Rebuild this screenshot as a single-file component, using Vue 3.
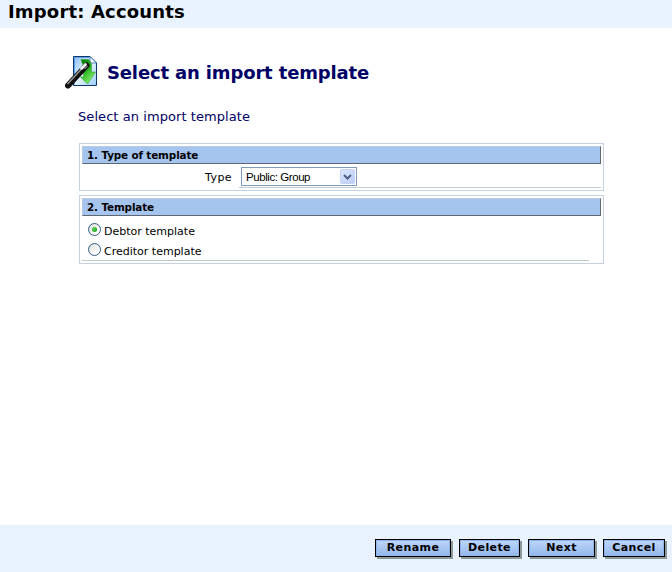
<script setup>
import { ref } from 'vue'

const template = ref('debtor')
const options = [
  { id: 'debtor', label: 'Debtor template' },
  { id: 'creditor', label: 'Creditor template' },
]
const actions = ['Rename', 'Delete', 'Next', 'Cancel']
</script>

<template>
  <div class="page">
    <header class="top"><h1>Import: Accounts</h1></header>

    <main>
      <div class="heading">
        <svg class="wizard" width="34" height="34" viewBox="0 0 34 34">
          <defs>
            <linearGradient id="paper" x1="0" y1="0" x2="1" y2="1">
              <stop offset="0" stop-color="#86bdf2" />
              <stop offset=".5" stop-color="#e4f3ff" />
              <stop offset="1" stop-color="#9accf9" />
            </linearGradient>
            <linearGradient id="arrow" x1="0" y1="0" x2=".6" y2="1">
              <stop offset="0" stop-color="#087008" />
              <stop offset=".5" stop-color="#27b41f" />
              <stop offset="1" stop-color="#8df273" />
            </linearGradient>
          </defs>
          <path d="M8.500 1.500H25L31.500 8V30.500H8.500Z" fill="url(#paper)" stroke="#10386f" />
          <path d="M9.500 29.500V2.500H24.500" fill="none" stroke="#5aa2e6" />
          <path d="M25 1.500V8H31.500Z" fill="#fff" stroke="#2862aa" stroke-width=".8" />
          <path d="M16 4.500H23.500L26.500 9V17H30.500L22.500 29L15.500 22H18.500V12Z" fill="url(#arrow)" stroke="#2fa52a" stroke-width=".6" />
          <path d="M3 30.500L21.500 10.500" stroke="#101010" stroke-width="6" stroke-linecap="round" />
          <path d="M2.500 29L16 14.500" stroke="#969696" stroke-width="1.500" />
          <path d="M16.500 13.500L20.500 9.500" stroke="#f1f1f1" stroke-width="2.800" stroke-linecap="round" />
          <path d="M19.500 14L22.500 11" stroke="#777" stroke-width="1.500" />
        </svg>
        <h2>Select an import template</h2>
      </div>
      <p class="intro">Select an import template</p>

      <section class="panel type-panel">
        <h3>1. Type of template</h3>
        <div class="row">
          <span class="label">Type</span>
          <div class="field">
            <div class="select">
              <span class="value">Public: Group</span>
              <span class="drop">
                <svg width="9" height="6" viewBox="0 0 9 6"><path d="M1 1L4.500 4.500L8 1" fill="none" stroke="#4d6185" stroke-width="2" /></svg>
              </span>
            </div>
          </div>
        </div>
      </section>

      <section class="panel template-panel">
        <h3>2. Template</h3>
        <div class="options">
          <div v-for="o in options" :key="o.id" class="option" @click="template = o.id">
            <span class="radio"><i v-if="template === o.id"></i></span>
            <span>{{ o.label }}</span>
          </div>
        </div>
      </section>
    </main>

    <footer>
      <button v-for="a in actions" :key="a" :class="a.toLowerCase()"><span>{{ a }}</span></button>
    </footer>
  </div>
</template>

<style>
body { background: #fff; }
</style>

<style scoped>
.page {
  width: 672px;
  height: 572px;
  display: flex;
  flex-direction: column;
  overflow: hidden;
  background: #fff;
  font-family: "DejaVu Sans", Verdana, sans-serif;
  color: #000;
}
.page * { box-sizing: border-box; }
h1, h2, h3, p { margin: 0; white-space: nowrap; }
.top { height: 28px; background: #e8f3ff; padding: 1px 0 0 8px; }
h1 { font-size: 18px; line-height: 22px; letter-spacing: .17px; }
main { flex: 1; padding: 27px 0 0 65px; }
.heading { display: flex; height: 34px; }
.wizard { flex: none; }
h2 { margin-left: 8px; color: #000066; font-size: 18px; line-height: 35px; letter-spacing: -.15px; }
.intro { margin: 19px 0 0 13px; height: 16px; font-size: 13px; line-height: 17px; letter-spacing: .07px; color: #000066; }
.panel { width: 525px; margin-left: 14px; padding: 2px; border: 1px solid #c5d2e3; }
.type-panel { margin-top: 19px; height: 48px; }
.template-panel { margin-top: 4px; height: 69px; }
h3 {
  width: 519px;
  height: 18px;
  padding-left: 4px;
  background: #a6c5ee;
  border: 1px solid #b6cae4;
  border-right-color: #5c6675;
  border-bottom-color: #5c6675;
  font-size: 10.4px;
  line-height: 16px;
  letter-spacing: -.13px;
}
.row { display: flex; width: 519px; height: 24px; font-size: 11px; }
.label { width: 157px; padding-left: 123px; line-height: 27px; letter-spacing: .45px; }
.field { flex: 1; height: 24px; padding: 3px 0 0 2px; border-bottom: 1px solid #c3ccd4; }
.select {
  display: flex;
  justify-content: space-between;
  width: 116px;
  height: 19px;
  padding: 1px;
  border: 1px solid #7f9db9;
  background: #fff;
}
.value { padding-left: 3px; font: 11.5px/16px "Liberation Sans", Arial, sans-serif; letter-spacing: -.43px; }
.drop {
  display: flex;
  align-items: center;
  justify-content: center;
  width: 15px;
  height: 15px;
  border: 1px solid #c3d2f5;
  border-radius: 2px;
  background: linear-gradient(135deg, #dce7ff, #b9cdf8);
}
.options { width: 507px; height: 45px; padding: 4px 0 0 6px; border-bottom: 1px solid #bdccc8; }
.option { display: flex; height: 20px; font-size: 11px; line-height: 24px; }
.radio {
  display: flex;
  align-items: center;
  justify-content: center;
  flex: none;
  width: 13px;
  height: 13px;
  margin: 3px 3px 0 0;
  border: 1px solid #315e8c;
  border-radius: 50%;
  background: linear-gradient(135deg, #dcdcd6, #fff 75%);
}
.radio i { width: 5px; height: 5px; border-radius: 50%; background: radial-gradient(circle at 35% 35%, #55d551, #179817); }
footer { display: flex; height: 47px; padding: 14px 0 0 375px; background: #e8f3ff; }
button {
  height: 18px;
  margin: 0 8px 0 0;
  padding: 0;
  flex: none;
  border: 1px solid #000;
  border-radius: 0;
  background: linear-gradient(#bdd7fb, #93b6ea);
  box-shadow: inset 0 0 0 1px #8db3e8, 2px 2px 0 #8b9a9b;
  color: #000;
  font: bold 11px/16px "DejaVu Sans", Verdana, sans-serif;
  letter-spacing: .4px;
}
.rename { width: 76px; }
.delete { width: 61px; }
.next { width: 67px; }
.cancel { width: 62px; margin-right: 0; }
</style>
